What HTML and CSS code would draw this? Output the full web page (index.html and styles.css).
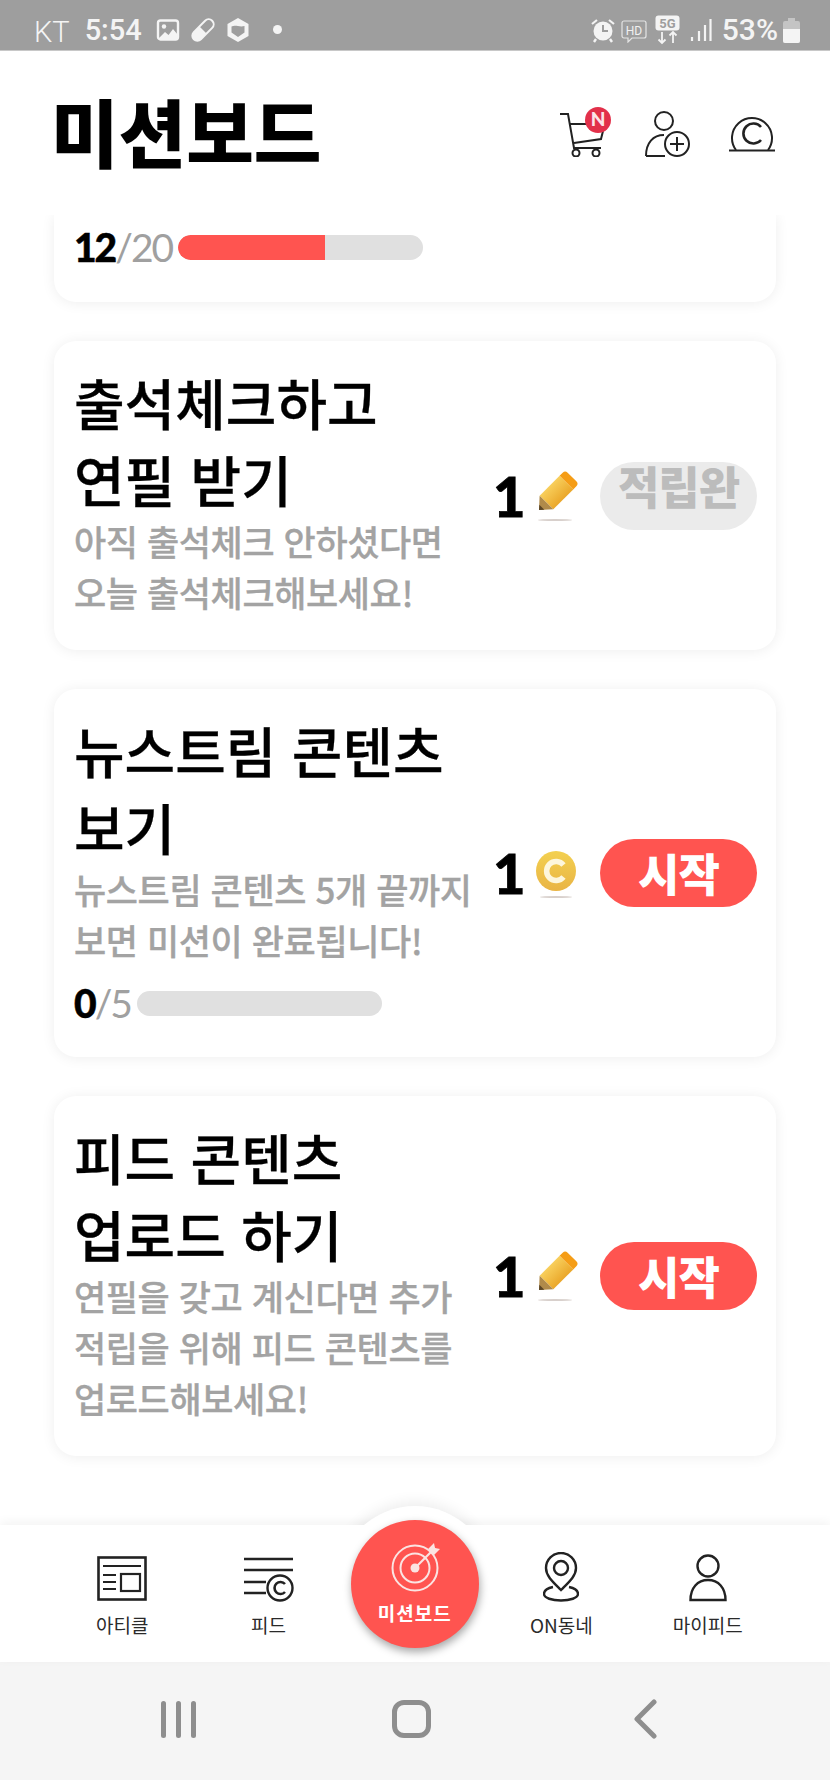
FILE: index.html
```html
<!DOCTYPE html>
<html lang="ko">
<head>
<meta charset="utf-8">
<title>미션보드</title>
<link rel="stylesheet" href="styles.css">
</head>
<body>
<div class="app">
  <div class="status">
    <div class="status-left">
      <span class="carrier">KT</span>
      <span class="clock">5:54</span>
      <svg class="si" width="24" height="24" viewBox="0 0 24 24"><rect x="2" y="2.500" width="20" height="19" rx="2.500" fill="none" stroke="#f4f4f4" stroke-width="2.400"/><circle cx="8" cy="8.500" r="2.200" fill="#f4f4f4"/><path d="M3 20l6-6 3.500 3 4.500-6 5 6v4H3z" fill="#f4f4f4"/></svg>
      <svg class="si" width="24" height="24" viewBox="0 0 24 24"><g transform="rotate(-45 12 12)"><rect x="-1" y="7" width="26" height="10" rx="5" fill="none" stroke="#f4f4f4" stroke-width="2"/><path d="M4 7h8v10H4a5 5 0 0 1 0-10z" fill="#f4f4f4"/></g></svg>
      <svg class="si" width="24" height="26" viewBox="0 0 24 26"><path d="M12 1l10.500 6v12L12 25 1.500 19V7z" fill="#f4f4f4"/><path d="M5.500 9.500c4-2 8 1 13-.5v6.500L12 20l-6.500-4.500z" fill="#9e9e9e"/></svg>
      <span class="dot"></span>
    </div>
    <div class="status-right">
      <svg width="24" height="26" viewBox="0 0 24 26"><circle cx="12" cy="14" r="9.500" fill="#f4f4f4"/><path d="M12 8v6h5" fill="none" stroke="#9e9e9e" stroke-width="2"/><path d="M1 7l5-4M23 7l-5-4" stroke="#f4f4f4" stroke-width="2.200"/><path d="M5 22l-2 3M19 22l2 3" stroke="#f4f4f4" stroke-width="2.400"/></svg>
      <svg class="s-hd" width="26" height="26" viewBox="0 0 26 26"><path d="M3 4h20a2 2 0 0 1 2 2v13a2 2 0 0 1-2 2H11l-4 4v-4H3a2 2 0 0 1-2-2V6a2 2 0 0 1 2-2z" fill="none" stroke="#e4e4e4" stroke-width="1.200"/><text x="13" y="17.500" class="hd">HD</text></svg>
      <svg class="s-5g" width="25" height="30" viewBox="0 0 25 30"><rect x="0.500" y="0.500" width="24" height="15" rx="3" fill="#f4f4f4"/><text x="12.500" y="13" class="fiveg">5G</text><path d="M7 17v11M3.500 24.500L7 28l3.500-3.500M18 28V17M14.500 20.500L18 17l3.500 3.500" fill="none" stroke="#f4f4f4" stroke-width="1.800"/></svg>
      <svg width="22" height="24" viewBox="0 0 22 24"><path d="M2 19v4M9 13v10M15 7v16M20.500 1v22" stroke="#f4f4f4" stroke-width="2.200" fill="none"/></svg>
      <span class="pct">53%</span>
      <svg width="17" height="26" viewBox="0 0 17 26"><path d="M5 1h7v3h3a2 2 0 0 1 2 2v18a2 2 0 0 1-2 2H2a2 2 0 0 1-2-2V6a2 2 0 0 1 2-2h3z" fill="#c4c4c4"/><path d="M0 12h17v12a2 2 0 0 1-2 2H2a2 2 0 0 1-2-2z" fill="#f4f4f4"/></svg>
    </div>
  </div>

  <header class="top">
    <h1 class="page-title">미션보드</h1>
    <div class="top-icons">
      <svg width="56" height="50" viewBox="0 0 56 50" class="cart"><g fill="none" stroke="#222" stroke-width="2"><path d="M1 7h8l6 34h27"/><path d="M11 17h20M15 36l27-4 2-8"/><circle cx="17" cy="46" r="3.500"/><circle cx="37" cy="46" r="3.500"/></g><circle cx="39" cy="13" r="13" fill="#e2304a"/><text x="39" y="19" class="badge-n">N</text></svg>
      <svg width="46" height="46" viewBox="0 0 46 46" class="addp"><g fill="none" stroke="#222" stroke-width="2"><circle cx="20" cy="10" r="9"/><path d="M2 45c0-13 7-21 18-21"/><path d="M2 45h19"/><circle cx="33" cy="33" r="12"/><path d="M33 26v14M26 33h14"/></g></svg>
      <svg width="48" height="38" viewBox="0 0 48 38" class="coin"><g fill="none" stroke="#222" stroke-width="2"><path d="M8 36a20 20 0 1 1 32 0"/><path d="M1 36.500h46"/><path d="M33 13a10 10 0 1 0 0 13" stroke-width="2.600"/></g></svg>
    </div>
  </header>

  <main class="list">
    <section class="card card-cut">
      <div class="progress"><span class="count"><b>12</b>/20</span><span class="bar"><span class="fill" style="width:60%"></span></span></div>
    </section>

    <section class="card">
      <div class="body">
        <h2 class="title">출석체크하고<br>연필 받기</h2>
        <p class="desc">아직 출석체크 안하셨다면<br>오늘 출석체크해보세요!</p>
      </div>
      <div class="reward">
        <span class="num">1</span>
        <svg class="prize" width="44" height="52" viewBox="0 0 44 52"><defs><linearGradient id="pg" x1="0" y1="0" x2="1" y2="0"><stop offset="0" stop-color="#f8cf5c"/><stop offset="1" stop-color="#eaa72a"/></linearGradient></defs><g transform="translate(20.500 23.500) rotate(45) scale(.88) translate(-22 -25.500)"><path d="M11 3a4 4 0 0 1 4-4h14a4 4 0 0 1 4 4v5H11z" fill="#f59d16"/><rect x="11" y="8" width="22" height="32" fill="url(#pg)"/><path d="M11 40h22l-11 12z" fill="#b08a4a"/><path d="M18 47.500h8L22 52z" fill="#5a4526"/></g><ellipse cx="20" cy="50" rx="17" ry="1" fill="#d8d0cc"/></svg>
        <span class="btn btn-done">적립완</span>
      </div>
    </section>

    <section class="card">
      <div class="body">
        <h2 class="title">뉴스트림 콘텐츠<br>보기</h2>
        <p class="desc">뉴스트림 콘텐츠 5개 끝까지<br>보면 미션이 완료됩니다!</p>
        <div class="progress"><span class="count"><b>0</b>/5</span><span class="bar"></span></div>
      </div>
      <div class="reward">
        <span class="num">1</span>
        <svg class="prize" width="44" height="52" viewBox="0 0 44 52"><defs><linearGradient id="cg" x1="0" y1="0" x2="0" y2="1"><stop offset="0" stop-color="#f3d050"/><stop offset="1" stop-color="#e9b445"/></linearGradient></defs><circle cx="21" cy="24" r="20" fill="url(#cg)"/><path d="M28.500 18a9.500 9.500 0 1 0 0 12" fill="none" stroke="#fdf6dc" stroke-width="5.500"/><ellipse cx="21" cy="50" rx="16" ry="1" fill="#d8d0cc"/></svg>
        <span class="btn">시작</span>
      </div>
    </section>

    <section class="card">
      <div class="body">
        <h2 class="title">피드 콘텐츠<br>업로드 하기</h2>
        <p class="desc">연필을 갖고 계신다면 추가<br>적립을 위해 피드 콘텐츠를<br>업로드해보세요!</p>
      </div>
      <div class="reward">
        <span class="num">1</span>
        <svg class="prize" width="44" height="52" viewBox="0 0 44 52"><g transform="translate(20.500 23.500) rotate(45) scale(.88) translate(-22 -25.500)"><path d="M11 3a4 4 0 0 1 4-4h14a4 4 0 0 1 4 4v5H11z" fill="#f59d16"/><rect x="11" y="8" width="22" height="32" fill="url(#pg)"/><path d="M11 40h22l-11 12z" fill="#b08a4a"/><path d="M18 47.500h8L22 52z" fill="#5a4526"/></g><ellipse cx="20" cy="50" rx="17" ry="1" fill="#d8d0cc"/></svg>
        <span class="btn">시작</span>
      </div>
    </section>
  </main>

  <nav class="tabs">
    <div class="tab">
      <svg width="50" height="46" viewBox="0 0 50 46"><g fill="none" stroke="#222"><rect x="1.500" y="1.500" width="47" height="42" stroke-width="2.600"/><path d="M6 10h38M6 19h13M6 26h13M6 33h13" stroke-width="2.200"/><rect x="24" y="18" width="19" height="17" stroke-width="2.200"/></g></svg>
      <span class="tab-label">아티클</span>
    </div>
    <div class="tab">
      <svg width="52" height="46" viewBox="0 0 52 46"><g fill="none" stroke="#222" stroke-width="2.400"><path d="M1 3h49M1 14h49M1 26h22M1 37h22"/><circle cx="37" cy="32" r="12.500"/><path d="M42 28a6 6 0 1 0 0 8" stroke-width="2.600"/></g></svg>
      <span class="tab-label">피드</span>
    </div>
    <div class="tab tab-main">
      <div class="fab">
        <svg width="56" height="52" viewBox="0 0 56 52"><g fill="none" stroke="#fbe4e2"><circle cx="26" cy="28" r="22.500" stroke-width="2"/><circle cx="26" cy="28" r="14.500" stroke-width="2"/><path d="M26 28L46 8" stroke-width="2.200"/></g><circle cx="26" cy="28" r="4.500" fill="#fbe4e2"/><path d="M39 9l6-6 1 5 5 1-6 6z" fill="#fbe4e2"/></svg>
        <span class="fab-label">미션보드</span>
      </div>
    </div>
    <div class="tab">
      <svg width="36" height="50" viewBox="0 0 36 50"><g fill="none" stroke="#222" stroke-width="2.400"><path d="M18 38C10 30 3 24 3 16a15 15 0 0 1 30 0c0 8-7 14-15 22z"/><circle cx="18" cy="16" r="7"/><path d="M10 35c-5 1-9 3.500-9 7 0 4 8 6.500 17 6.500S35 46 35 42c0-3.500-4-6-9-7"/></g></svg>
      <span class="tab-label">ON동네</span>
    </div>
    <div class="tab">
      <svg width="38" height="48" viewBox="0 0 38 48"><g fill="none" stroke="#222" stroke-width="2.400"><circle cx="19" cy="12" r="10.500"/><path d="M1.500 46c0-12 7-20 17.500-20s17.500 8 17.500 20z"/></g></svg>
      <span class="tab-label">마이피드</span>
    </div>
  </nav>

  <div class="sysnav">
    <span class="sys-cell"><span class="sys-bars"><i></i><i></i><i></i></span></span>
    <span class="sys-cell"><span class="sys-home"></span></span>
    <span class="sys-cell"><svg width="24" height="40" viewBox="0 0 24 40"><path d="M21 3L4 20l17 17" fill="none" stroke="#8e8e8e" stroke-width="5" stroke-linecap="round" stroke-linejoin="round"/></svg></span>
  </div>
</div>
</body>
</html>
```
FILE: styles.css
```css
* { box-sizing: border-box; }
html, body { margin: 0; padding: 0; }
body { font-family: "Noto Sans CJK KR", "Noto Sans", sans-serif; background: #fff; }
.app { width: 830px; height: 1780px; display: flex; flex-direction: column; overflow: hidden; background: #fff; }

/* status bar */
.status { height: 51px; flex: none; background: #9e9e9e; display: flex; justify-content: space-between; align-items: center; padding: 9px 30px 0 34px; color: #f4f4f4; border-bottom: 1px solid #c8c8c8; }
.status-left, .status-right { display: flex; align-items: center; }
.status-left { gap: 11px; }
.status-right { gap: 8px; }
.carrier { font: 300 29px "Roboto", sans-serif; margin: 4px 4px 0 0; }
.clock { font: 500 29px "Roboto", sans-serif; margin-right: 3px; }
.pct { font: 500 30px "Roboto", sans-serif; margin-left: 2px; margin-right: -3px; }
.dot { width: 9px; height: 9px; border-radius: 50%; background: #f4f4f4; margin-left: 12px; }
.s-hd { margin-left: -2px; }
.s-5g { margin-right: 2px; }
.hd { font: 400 12px "Roboto", sans-serif; fill: #f0f0f0; text-anchor: middle; }
.fiveg { font: 700 13px "Roboto", sans-serif; fill: #9e9e9e; text-anchor: middle; }

/* header */
.top { height: 164px; flex: none; display: flex; justify-content: space-between; align-items: center; padding: 0 54px 0 51px; background: #fff; position: relative; z-index: 2; }
.page-title { margin: 0 0 4px; font-size: 73.500px; line-height: 1; font-weight: 900; color: #000; letter-spacing: 0; }
.top-icons { display: flex; align-items: flex-end; padding-bottom: 3px; }
.cart { margin-right: 29px; }
.addp { margin-right: 38px; }
.coin { margin-bottom: 5px; }
.badge-n { font: 900 19px "Lato", sans-serif; fill: #fbe4e8; text-anchor: middle; }

/* list */
.list { flex: 1; min-height: 0; overflow: hidden; padding: 0 54px; display: flex; flex-direction: column; gap: 39px; }
.card { flex: none; background: #fff; border-radius: 22px; box-shadow: 0 1px 14px rgba(0,0,0,.07); padding: 22px 19px 30px 20px; display: flex; align-items: center; }
.card-cut { height: 87px; border-radius: 0 0 22px 22px; padding: 7px 20px 30px; }
.body { flex: 1; min-width: 0; }
.title { margin: 0; font-size: 55px; line-height: 77px; font-weight: 500; color: #000; letter-spacing: 0; -webkit-text-stroke: .3px #000; }
.desc { margin: -2px 0 3px; font-size: 35px; line-height: 51px; font-weight: 500; color: #a3a3a3; letter-spacing: -.4px; -webkit-text-stroke: .3px #a3a3a3; }
.progress { display: flex; align-items: center; height: 48px; margin-top: 14px; }
.card-cut .progress { margin-top: 0; height: 50px; }
.count { font: 400 39px/50px "Lato", sans-serif; color: #a0a0a0; letter-spacing: -2px; margin-right: 6px; }
.count b { font-weight: 900; color: #000; -webkit-text-stroke: .5px #000; }
.bar { display: block; width: 245px; height: 25px; border-radius: 12.500px; background: #e0e0e0; overflow: hidden; }
.fill { display: block; height: 100%; background: #ff5450; border-radius: 12.500px 0 0 12.500px; }

.reward { flex: none; display: flex; align-items: center; margin-top: 8px; }
.num { font: 900 56px/1 "Lato", sans-serif; color: #000; width: 42px; -webkit-text-stroke: .8px #000; }
.prize { margin-right: 21px; }
.btn { width: 157px; height: 68px; border-radius: 34px; background: #ff5450; color: #fff; font-size: 45px; font-weight: 900; display: flex; align-items: center; justify-content: center; line-height: 1; padding-bottom: 2px; letter-spacing: -1px; }
.btn-done { background: #ebebeb; color: #bcbcbc; padding-bottom: 20px; }

/* tabs */
.tabs { height: 137px; flex: none; background: #fff; display: grid; grid-template-columns: repeat(5, 1fr); padding: 0 49px; position: relative; box-shadow: 0 -3px 10px rgba(0,0,0,.05); }
.tabs::before { content: ""; position: absolute; left: 337px; top: -19px; width: 156px; height: 156px; border-radius: 50%; background: #fff; box-shadow: 0 -4px 14px rgba(0,0,0,.07); clip-path: inset(-30px -30px 137px -30px); }
.tab { display: flex; flex-direction: column; align-items: center; justify-content: flex-end; padding-bottom: 23px; gap: 9px; position: relative; }
.tab-label { font-size: 19px; line-height: 28px; color: #2a2a2a; letter-spacing: 0; }
.tab-main { padding: 0; }
.fab { position: absolute; left: 9px; top: -5px; width: 128px; height: 128px; border-radius: 50%; background: #ff5450; box-shadow: 1px 4px 8px rgba(0,0,0,.35); display: flex; flex-direction: column; align-items: center; padding-top: 20px; }
.fab svg { margin-left: 4px; }
.fab-label { color: #fff; font-size: 19px; line-height: 24px; font-weight: 700; letter-spacing: 1px; margin-top: 9px; }

/* system nav */
.sysnav { height: 118px; flex: none; background: #f5f5f5; display: grid; grid-template-columns: repeat(3, 233px); padding: 0 0 4px 62px; align-items: center; }
.sys-cell { display: flex; justify-content: center; align-items: center; }
.sys-bars { display: flex; gap: 10px; }
.sys-bars i { display: block; width: 5px; height: 37px; border-radius: 3px; background: #8e8e8e; }
.sys-home { display: block; width: 39px; height: 38px; border: 5px solid #8e8e8e; border-radius: 12px; }
```
